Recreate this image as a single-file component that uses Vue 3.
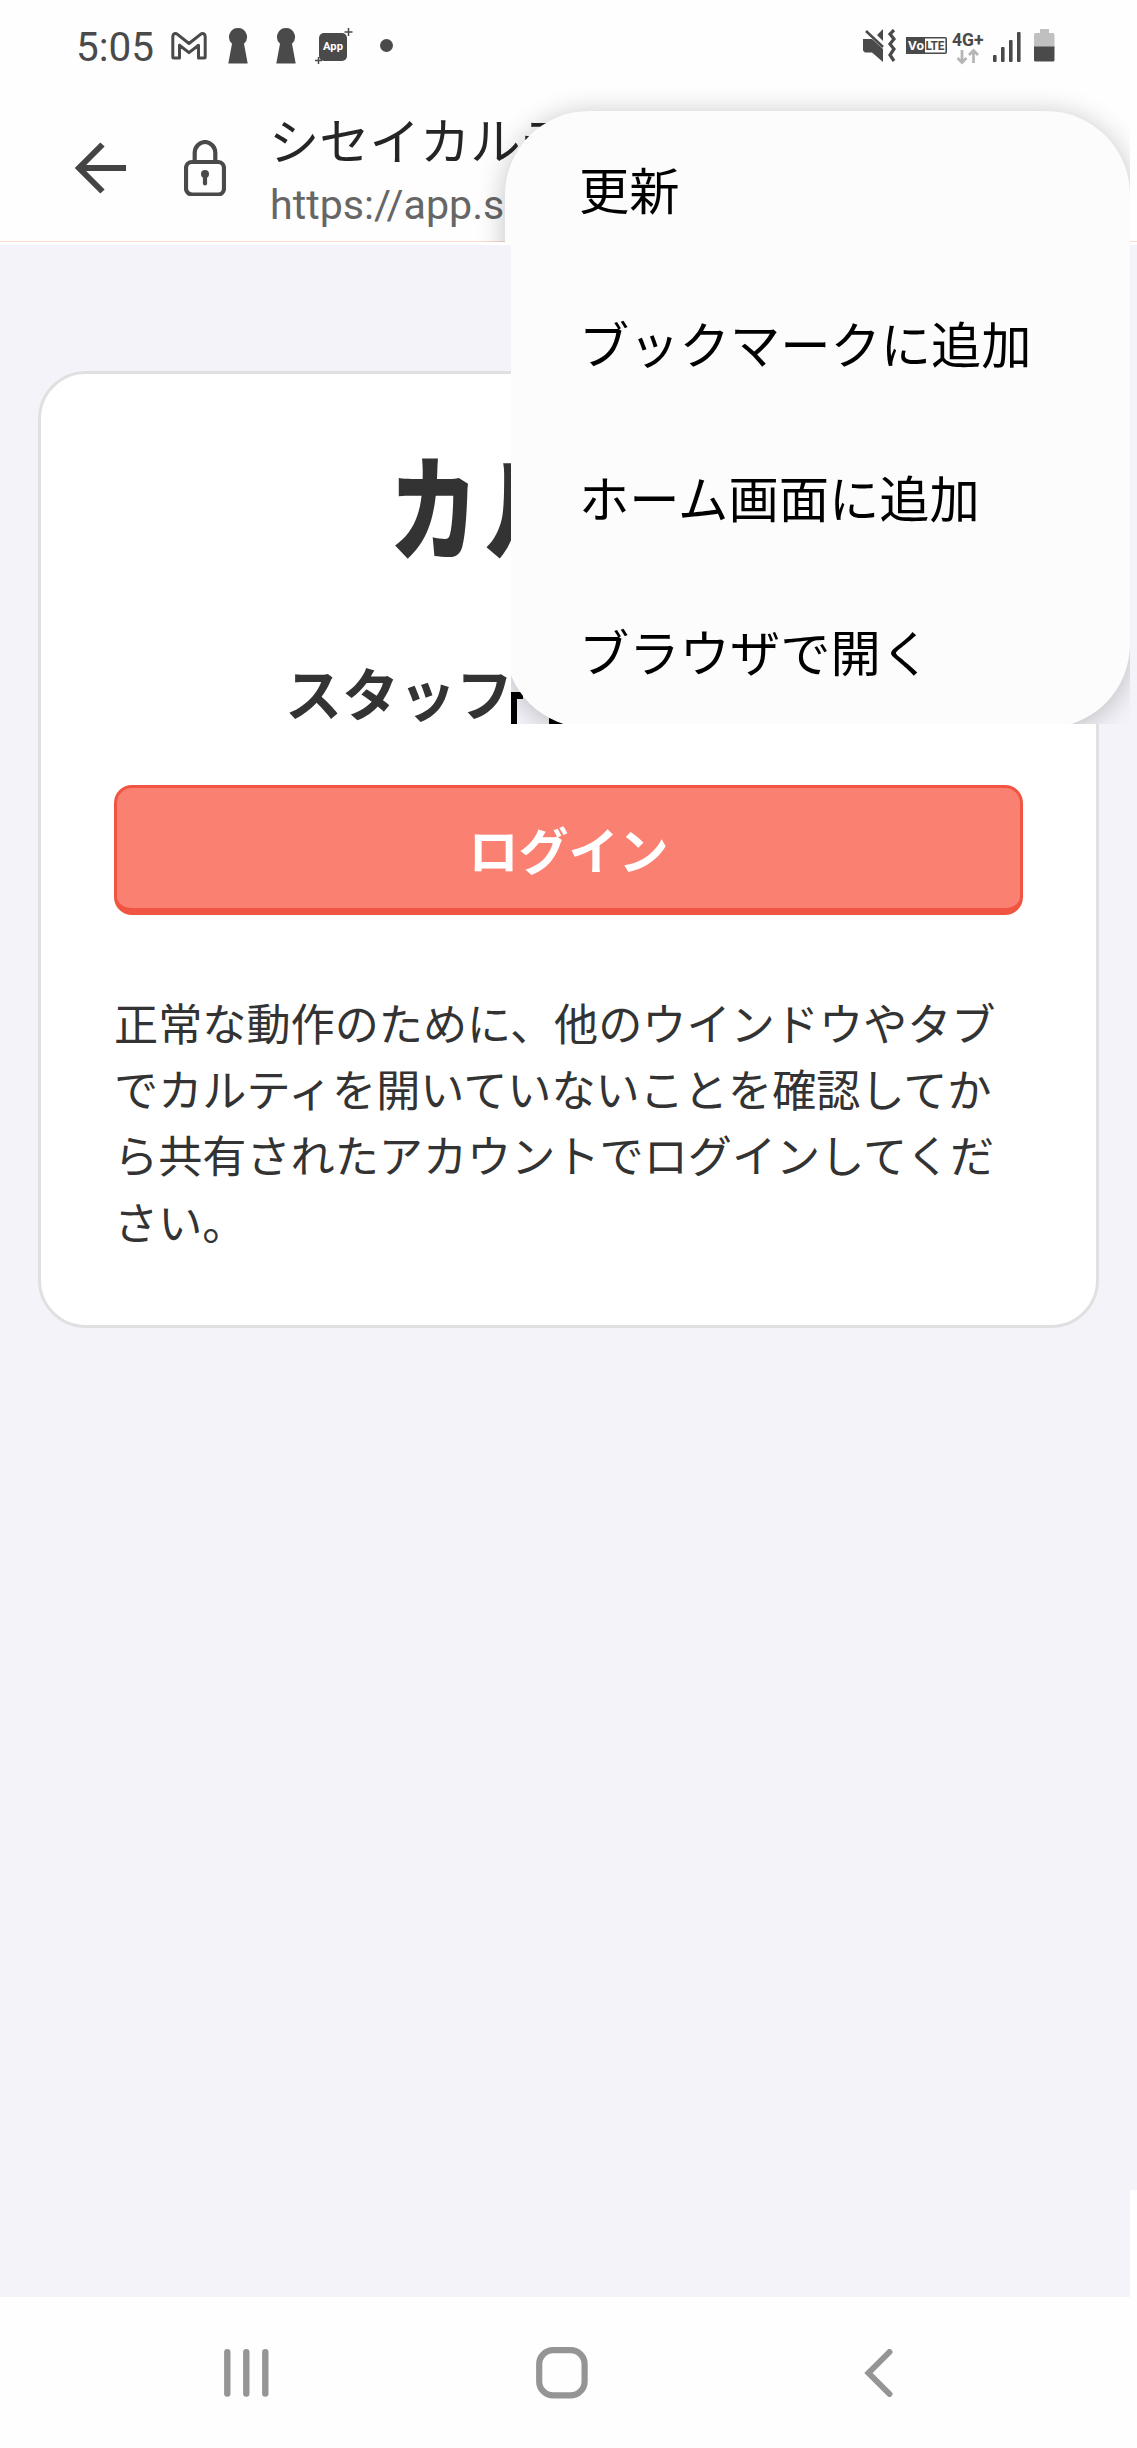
<script setup>
const menuItems = ['更新', 'ブックマークに追加', 'ホーム画面に追加', 'ブラウザで開く']
const bars = [
  { x: 1, y: 23, h: 7 },
  { x: 9, y: 15, h: 15 },
  { x: 17, y: 8, h: 22 },
  { x: 25, y: 0, h: 30 },
]
</script>

<template>
  <div class="screen">
    <header class="status">
      <div class="status-left">
        <span class="clock">5:05</span>
        <svg class="gmail" width="36" height="28" viewBox="0 0 36 28">
          <path d="M1.800 25V4.500C1.800 1.600 4.500 .8 6.500 2.400L18 11.500 29.500 2.400C31.500 .8 34.200 1.600 34.200 4.500V25Q34.200 26 33 26H27.500V13.200L18 20.600 8.500 13.200V26H3Q1.800 26 1.800 25Z" fill="none" stroke="#4a4a4a" stroke-width="3" stroke-linejoin="round" />
        </svg>
        <svg v-for="n in 2" :key="n" class="keyhole" width="20" height="36" viewBox="0 0 20 36">
          <path d="M10 0a9 9 0 0 1 6 15.700L19.700 35.500H.3L4 15.700A9 9 0 0 1 10 0Z" fill="#4a4a4a" />
        </svg>
        <svg class="app" width="38" height="38" viewBox="0 0 38 38">
          <rect x="4" y="6" width="28" height="28" rx="5" fill="#4a4a4a" />
          <path d="M33.500 1v8M29.500 5h8M3.500 30v7M0 33.500h7" stroke="#4a4a4a" stroke-width="1.500" />
          <text x="18" y="23.300" text-anchor="middle" font-size="11" font-weight="700" fill="#fff" textLength="20" lengthAdjust="spacingAndGlyphs">App</text>
        </svg>
        <span class="dot"></span>
      </div>
      <div class="status-right">
        <svg width="34" height="34" viewBox="0 0 34 34">
          <path d="M0 10H9L20 20V33L9 23.500H2L0 21.500ZM14 6 20 0V12Z" fill="#4a4a4a" />
          <path d="M3 2 20 18" stroke="#4a4a4a" stroke-width="2.600" />
          <path d="M31 1 27 5 31 10 27 15 31 20 27 26 31 32" fill="none" stroke="#4a4a4a" stroke-width="3.200" />
        </svg>
        <svg class="volte" width="41" height="17" viewBox="0 0 41 17">
          <rect x=".8" y=".8" width="39.400" height="15.400" rx="1" fill="#fff" stroke="#4a4a4a" stroke-width="1.600" />
          <path d="M0 0H19V17H0Z" fill="#4a4a4a" />
          <text x="2" y="13" font-size="12.500" font-weight="700" fill="#fff" textLength="16" lengthAdjust="spacingAndGlyphs">Vo</text>
          <text x="19.500" y="13.300" font-size="13" font-weight="700" fill="#4a4a4a" textLength="19" lengthAdjust="spacingAndGlyphs">LTE</text>
        </svg>
        <svg class="net" width="32" height="34" viewBox="0 0 32 34">
          <text x="0" y="14.500" font-size="17.500" font-weight="700" fill="#4a4a4a" textLength="31.500" lengthAdjust="spacingAndGlyphs">4G+</text>
          <path d="M10 19V31M5.500 27 10 31.500 14.500 27M21.500 32V20M17 24 21.500 19.500 26 24" fill="none" stroke="#b5b5b5" stroke-width="2.700" />
        </svg>
        <svg class="signal" width="29" height="30" viewBox="0 0 29 30">
          <rect v-for="b in bars" :key="b.x" :x="b.x - 1" :y="b.y" width="3.600" :height="b.h" rx="1" fill="#4a4a4a" />
        </svg>
        <svg class="battery" width="21" height="33" viewBox="0 0 21 33">
          <path d="M6 0H15V4H19Q20.500 4 20.500 6V18H0V6Q0 4 1.500 4H6Z" fill="#c0c0c0" />
          <path d="M0 17.500H20.500V31Q20.500 32.500 19 32.500H1.500Q0 32.500 0 31Z" fill="#4a4a4a" />
        </svg>
      </div>
    </header>

    <div class="toolbar">
      <svg class="back" width="52" height="52" viewBox="0 0 52 52">
        <path d="M51 26H4M27.500 2.500 4 26 27.500 49.500" fill="none" stroke="#444" stroke-width="6" />
      </svg>
      <svg class="lock" width="42" height="56" viewBox="0 0 42 56">
        <rect x="2" y="22" width="38" height="32.500" rx="6" fill="none" stroke="#4a4a4a" stroke-width="4.200" />
        <path d="M10.700 21V13a10.300 11 0 0 1 20.600 0v8" fill="none" stroke="#4a4a4a" stroke-width="4.200" />
        <circle cx="21" cy="34" r="4" fill="#4a4a4a" />
        <path d="M21 34V43.500" stroke="#4a4a4a" stroke-width="4.200" stroke-linecap="round" />
      </svg>
      <div class="site">
        <div class="site-title">シセイカルテ</div>
        <div class="site-url">https://app.s</div>
      </div>
    </div>

    <main class="page">
      <section class="card">
        <h1><span>カル</span></h1>
        <h2>スタッフ</h2>
        <button class="login">ログイン</button>
        <p>正常な動作のために、他のウインドウやタブでカルティを開いていないことを確認してから共有されたアカウントでログインしてください。</p>
      </section>
      <div class="edge"></div>
    </main>

    <footer class="nav">
      <svg class="recents" width="45" height="48" viewBox="0 0 45 48">
        <path d="M3.300 3.300V44.500M22.300 3.300V44.500M41.300 3.300V44.500" stroke="#959595" stroke-width="6.400" stroke-linecap="round" />
      </svg>
      <svg class="home" width="52" height="52" viewBox="0 0 52 52">
        <rect x="3.200" y="3.200" width="45.400" height="45.200" rx="14" fill="none" stroke="#959595" stroke-width="6.200" />
      </svg>
      <svg class="prev" width="29" height="48" viewBox="0 0 29 48">
        <path d="M25.500 3 4.500 24 25.500 45" fill="none" stroke="#959595" stroke-width="6" stroke-linecap="round" />
      </svg>
    </footer>

    <div class="overlay">
      <div class="backdrop"></div>
      <ul class="menu">
        <li v-for="item in menuItems" :key="item">{{ item }}</li>
      </ul>
    </div>
  </div>
</template>

<style>
body {
  margin: 0;
  background: #fff;
}
</style>

<style scoped>
* {
  box-sizing: border-box;
}
.screen {
  position: relative;
  width: 1137px;
  height: 2448px;
  display: flex;
  flex-direction: column;
  overflow: hidden;
  background: #fefefe;
  font-family: Roboto, "Noto Sans CJK JP", sans-serif;
}
svg {
  display: block;
  flex: none;
}
.status {
  height: 92px;
  display: flex;
  justify-content: space-between;
  padding: 0 82px 1px 76px;
}
.status-left,
.status-right {
  display: flex;
  align-items: center;
}
.clock {
  width: 78px;
  margin-top: 3px;
  font-size: 40.5px;
  line-height: 48px;
  color: #4a4a4a;
}
.gmail {
  margin-left: 16.5px;
}
.keyhole {
  margin-left: 21.5px;
  margin-top: 1px;
}
.keyhole + .keyhole {
  margin-left: 28px;
}
.app {
  margin-left: 19px;
  margin-top: 1px;
}
.dot {
  width: 13px;
  height: 13px;
  margin-left: 26.5px;
  border-radius: 50%;
  background: #4a4a4a;
}
.volte {
  margin-left: 9px;
}
.net {
  margin-left: 5px;
  margin-top: 4px;
}
.signal {
  margin-left: 9px;
  margin-top: 2px;
}
.battery {
  margin-left: 12px;
}
.toolbar {
  height: 153px;
  display: flex;
  align-items: flex-start;
  padding-left: 75px;
  background: linear-gradient(#fbd9cf, #fbd9cf) 0 149px / 100% 1px no-repeat;
}
.back {
  margin-top: 50px;
}
.lock {
  margin: 48px 46px 0 57px;
}
.site {
  padding-top: 21px;
  white-space: nowrap;
}
.site-title {
  margin-left: -3px;
  font-size: 50.3px;
  line-height: 60px;
  color: #252525;
}
.site-url {
  margin-top: 8px;
  margin-left: -2px;
  font-size: 41.2px;
  line-height: 48px;
  color: #666;
}
.page {
  position: relative;
  height: 2052px;
  padding: 126px 38px 0;
  background: #f4f3f9;
}
.edge {
  position: absolute;
  right: 0;
  bottom: 0;
  width: 7px;
  height: 107px;
  background: #fefefe;
}
.card {
  height: 957px;
  padding: 74px 73px 0;
  border: 3px solid #e0e0e0;
  border-radius: 48px;
  background: #fff;
  color: #333;
  display: flex;
  flex-direction: column;
}
h1 {
  margin: 0 0 0 275px;
  height: 130px;
  font-size: 115px;
  line-height: 130px;
  font-weight: 900;
  letter-spacing: 7px;
}
h1 span {
  display: inline-block;
  transform: scaleX(0.78);
  transform-origin: left;
}
h2 {
  margin: 79px 0 0 171px;
  height: 80px;
  font-size: 57px;
  line-height: 80px;
  font-weight: 700;
}
.login {
  width: 909px;
  height: 130px;
  margin: 48px 0 0;
  padding: 0;
  border: 3px solid #f05542;
  border-bottom-width: 7px;
  border-radius: 18px;
  background: #fa8072;
  color: #fff;
  font: 700 50px/120px "Noto Sans CJK JP", sans-serif;
}
p {
  margin: 78px 0 0;
  font-size: 44.15px;
  line-height: 66.2px;
}
.nav {
  height: 151px;
  display: flex;
  align-items: flex-start;
  padding: 52px 0 0 224px;
}
.home {
  margin: -2px 0 0 267px;
}
.prev {
  margin-left: 276px;
}
.overlay {
  position: absolute;
  left: 440px;
  top: 60px;
  width: 690px;
  height: 664px;
  overflow: hidden;
  clip-path: polygon(0 0, 100% 0, 100% 100%, 71px 100%, 71px 182px, 0 182px);
}
.backdrop {
  position: absolute;
  left: 71px;
  top: 185px;
  width: 619px;
  height: 479px;
  background:
    linear-gradient(#000, #000) 0 447px / 12px 7px no-repeat,
    linear-gradient(#000, #000) 0 447px / 6px 32px no-repeat,
    linear-gradient(#000, #000) 38px 473px / 14px 6px no-repeat,
    #f4f3f9;
}
.menu {
  position: absolute;
  left: 65px;
  top: 51px;
  width: 625px;
  height: 617px;
  margin: 0;
  padding: 5px 0 0 74px;
  list-style: none;
  border-radius: 84px;
  background: #fcfcfc;
  box-shadow: 0 3px 28px rgba(0, 0, 0, 0.24);
}
.menu li {
  height: 154px;
  font-size: 50.3px;
  line-height: 154px;
  color: #000;
  white-space: nowrap;
}
</style>
